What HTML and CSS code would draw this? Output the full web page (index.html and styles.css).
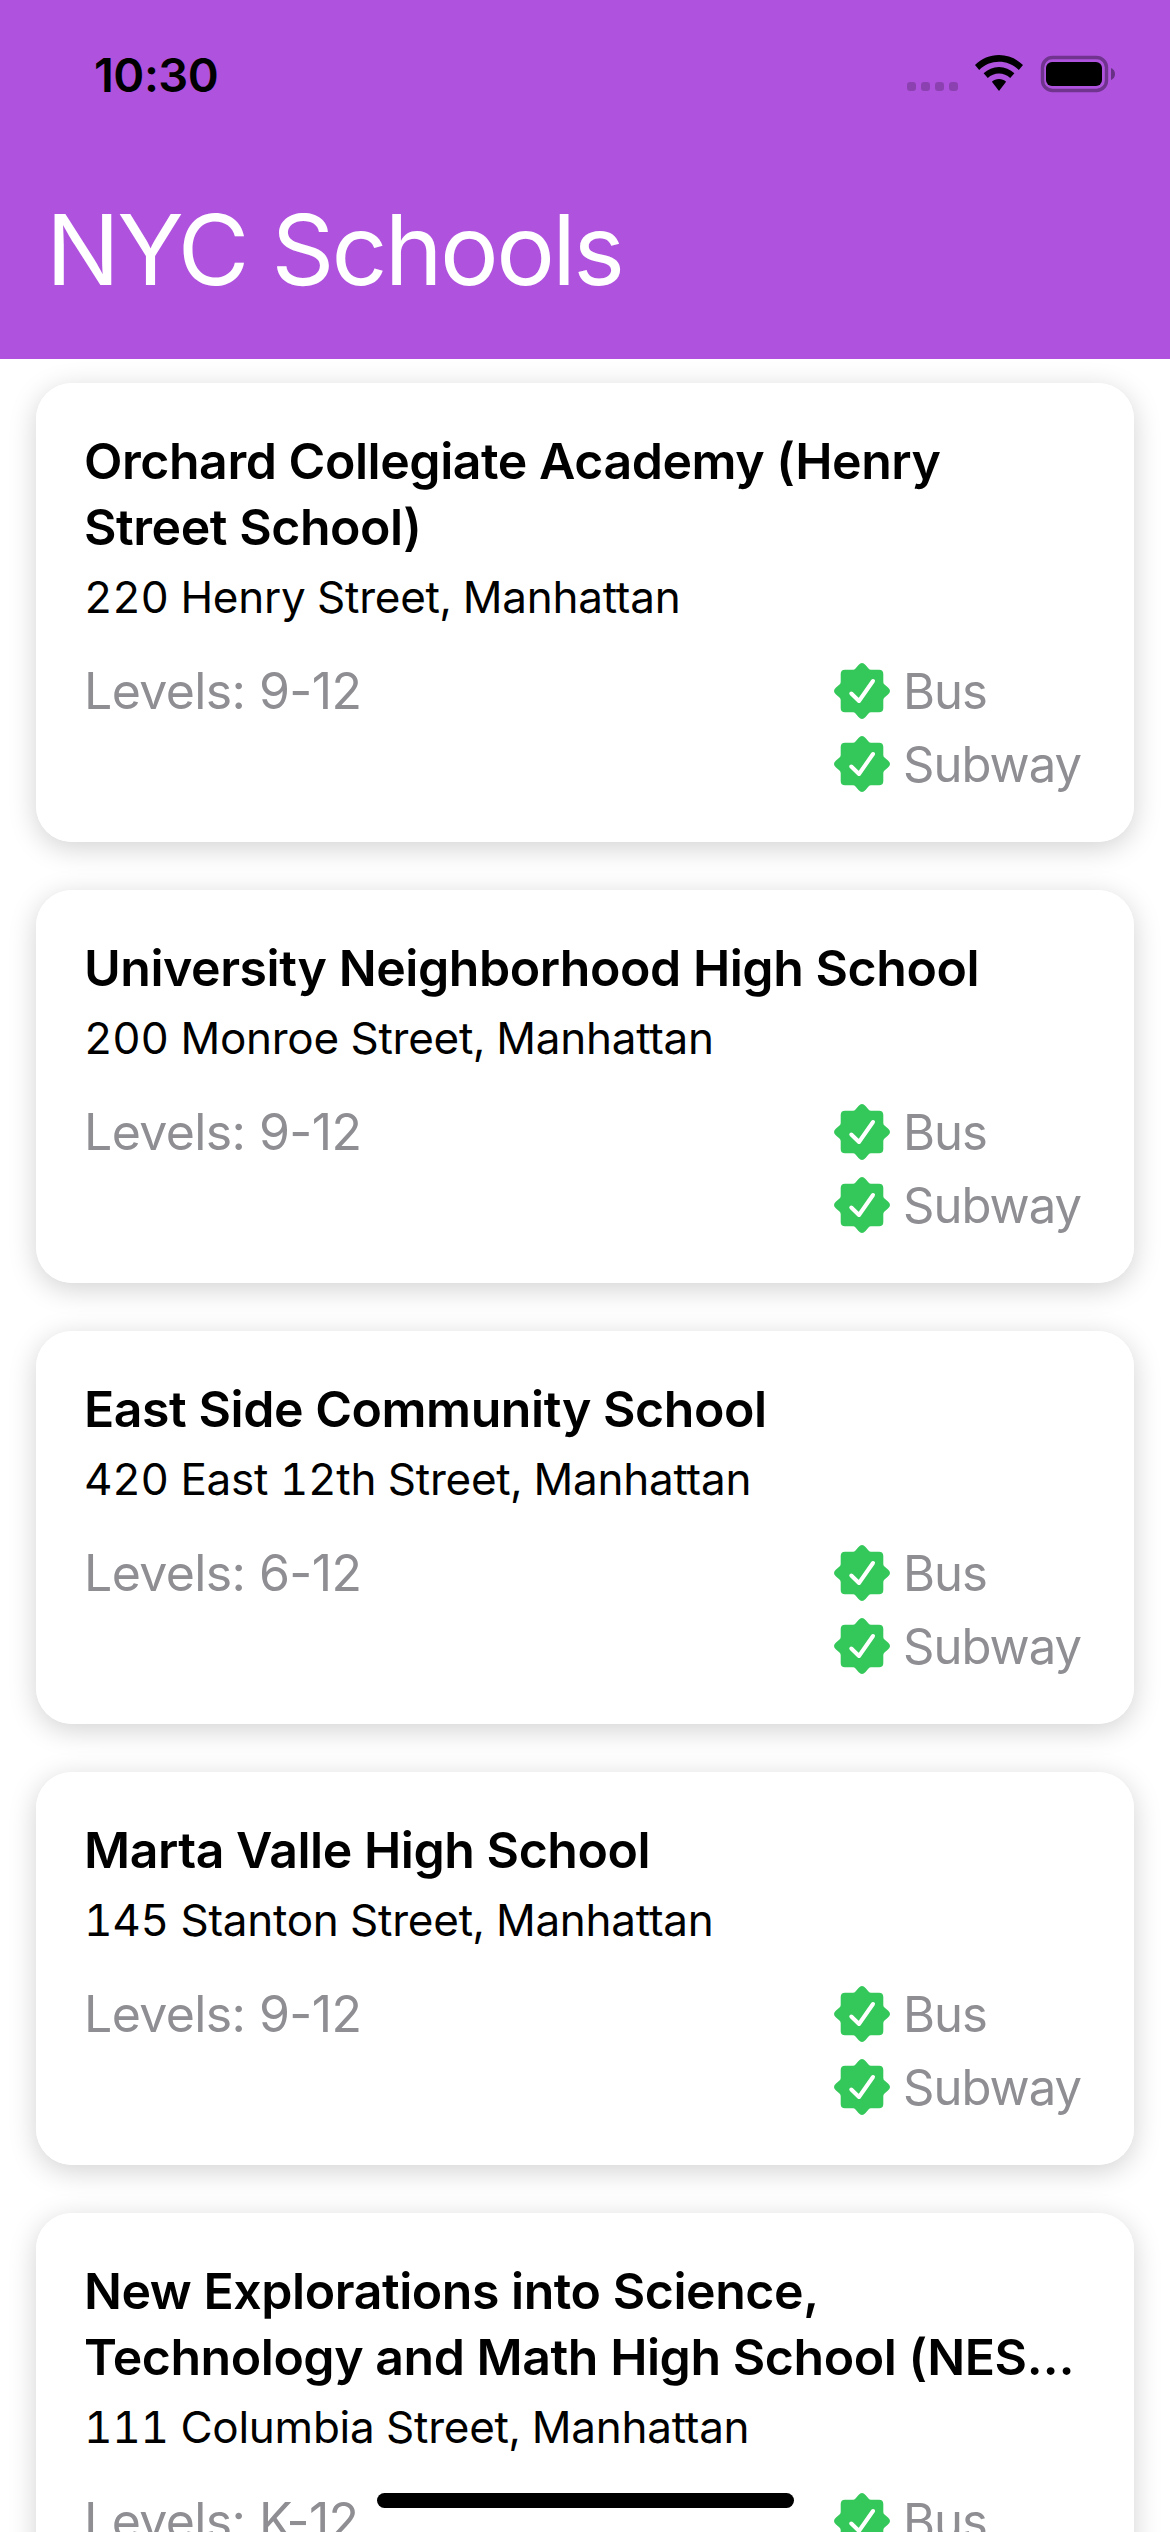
FILE: index.html
```html
<!DOCTYPE html>
<html lang="en">
<head>
<meta charset="utf-8">
<title>NYC Schools</title>
<link rel="stylesheet" href="styles.css">
</head>
<body>
<svg class="defs" width="0" height="0" aria-hidden="true">
  <symbol id="seal" viewBox="0 0 56 56">
    <path fill="#34c759" d="M24.500 2Q28-2 31.500 2L34.500 5.500Q35.500 6.700 37 6.700H45Q49.300 6.700 49.300 11V19Q49.300 20.500 50.500 21.500L54 24.500Q58 28 54 31.500L50.500 34.500Q49.300 35.500 49.300 37V45Q49.300 49.300 45 49.300H37Q35.500 49.300 34.500 50.500L31.500 54Q28 58 24.500 54L21.500 50.500Q20.500 49.300 19 49.300H11Q6.700 49.300 6.700 45V37Q6.700 35.500 5.500 34.500L2 31.500Q-2 28 2 24.500L5.500 21.500Q6.700 20.500 6.700 19V11Q6.700 6.700 11 6.700H19Q20.500 6.700 21.500 5.500Z"/>
    <path fill="none" stroke="#fff" stroke-width="4" stroke-linecap="round" stroke-linejoin="round" d="M17.300 30.500L25 38L39 18"/>
  </symbol>
</svg>
<div class="screen">
  <header class="header">
    <div class="status">
      <span class="time">10:30</span>
      <svg class="status-icons" width="209" height="38" viewBox="907 55 209 38">
        <g fill="#000" fill-opacity=".2">
          <rect x="907" y="82" width="9" height="9" rx="3"/>
          <rect x="921" y="82" width="9" height="9" rx="3"/>
          <rect x="935" y="82" width="9" height="9" rx="3"/>
          <rect x="949" y="82" width="9" height="9" rx="3"/>
        </g>
        <path d="M999 55C1008 55 1016.500 58.600 1023 65L1018.800 70C1013.500 64.700 1006.500 61.800 999 61.800C991.500 61.800 984.500 64.700 979.200 70L975 65C981.500 58.600 990 55 999 55Z"/>
        <path d="M999 67C1004.800 67 1010.200 69.300 1014.400 73.300L1010.200 78.100C1007.200 75.200 1003.200 73.600 999 73.600C994.800 73.600 990.800 75.200 987.800 78.100L983.600 73.300C987.800 69.300 993.200 67 999 67Z"/>
        <path d="M999 79C1001.700 79 1004.200 80 1006.100 81.800L999 91L991.900 81.800C993.800 80 996.300 79 999 79Z"/>
        <rect x="1042.500" y="57.500" width="64" height="33" rx="10" fill="none" stroke="#000" stroke-opacity=".36" stroke-width="3.400"/>
        <rect x="1046" y="62" width="56" height="24" rx="6"/>
        <path d="M1111 68C1113.500 69 1115 71.200 1115 74C1115 76.800 1113.500 79 1111 80Z" fill-opacity=".4"/>
      </svg>
    </div>
    <h1 class="page-title">NYC Schools</h1>
  </header>

  <main class="list">
    <article class="card">
      <h2 class="name">Orchard Collegiate Academy (Henry Street School)</h2>
      <p class="address">220 Henry Street, Manhattan</p>
      <div class="meta">
        <span class="levels">Levels: 9-12</span>
        <ul class="transit">
          <li class="transit-item"><svg class="seal"><use href="#seal"/></svg>Bus</li>
          <li class="transit-item"><svg class="seal"><use href="#seal"/></svg>Subway</li>
        </ul>
      </div>
    </article>
    <article class="card">
      <h2 class="name">University Neighborhood High School</h2>
      <p class="address">200 Monroe Street, Manhattan</p>
      <div class="meta">
        <span class="levels">Levels: 9-12</span>
        <ul class="transit">
          <li class="transit-item"><svg class="seal"><use href="#seal"/></svg>Bus</li>
          <li class="transit-item"><svg class="seal"><use href="#seal"/></svg>Subway</li>
        </ul>
      </div>
    </article>
    <article class="card">
      <h2 class="name">East Side Community School</h2>
      <p class="address">420 East 12th Street, Manhattan</p>
      <div class="meta">
        <span class="levels">Levels: 6-12</span>
        <ul class="transit">
          <li class="transit-item"><svg class="seal"><use href="#seal"/></svg>Bus</li>
          <li class="transit-item"><svg class="seal"><use href="#seal"/></svg>Subway</li>
        </ul>
      </div>
    </article>
    <article class="card">
      <h2 class="name">Marta Valle High School</h2>
      <p class="address">145 Stanton Street, Manhattan</p>
      <div class="meta">
        <span class="levels">Levels: 9-12</span>
        <ul class="transit">
          <li class="transit-item"><svg class="seal"><use href="#seal"/></svg>Bus</li>
          <li class="transit-item"><svg class="seal"><use href="#seal"/></svg>Subway</li>
        </ul>
      </div>
    </article>
    <article class="card">
      <h2 class="name"><span class="name-line">New Explorations into Science,</span><span class="name-line">Technology and Math High School (NEST+M)</span></h2>
      <p class="address">111 Columbia Street, Manhattan</p>
      <div class="meta">
        <span class="levels">Levels: K-12</span>
        <ul class="transit">
          <li class="transit-item"><svg class="seal"><use href="#seal"/></svg>Bus</li>
          <li class="transit-item"><svg class="seal"><use href="#seal"/></svg>Subway</li>
        </ul>
      </div>
    </article>
  </main>

  <div class="home-bar"></div>
</div>
</body>
</html>
```

FILE: styles.css
```css
* { box-sizing: border-box; }

html, body {
  margin: 0;
  padding: 0;
  background: #fff;
}

.defs { position: absolute; }

.screen {
  position: relative;
  width: 1170px;
  height: 2532px;
  overflow: hidden;
  font-family: Inter, "Liberation Sans", sans-serif;
  color: #000;
}

.header {
  position: relative;
  z-index: 1;
  height: 359px;
  background: #af52de;
  display: flex;
  flex-direction: column;
}

.status {
  display: flex;
  justify-content: space-between;
  align-items: flex-start;
  padding: 55px 54px 0 94px;
  height: 195px;
}

.time {
  font-size: 47px;
  font-weight: 600;
  line-height: 40px;
  letter-spacing: -0.5px;
}

.status-icons { display: block; }

.page-title {
  margin: 0;
  padding-left: 46px;
  font-size: 98px;
  font-weight: 400;
  line-height: 110px;
  letter-spacing: -2.7px;
  color: #fff;
}

.list {
  isolation: isolate;
  display: flex;
  flex-direction: column;
  gap: 48px;
  padding: 24px 36px 0;
}

.card {
  position: relative;
  flex: none;
  padding: 45px 53px 41px 48px;
}

.card::before,
.card::after {
  content: "";
  position: absolute;
  inset: 0;
  border-radius: 36px;
  background: #fff;
}

.card::before {
  z-index: -2;
  box-shadow: 0 6px 28px rgba(0, 0, 0, .18);
}

.card::after { z-index: -1; }

.name {
  margin: 0;
  font-size: 50px;
  font-weight: 600;
  line-height: 66px;
  letter-spacing: -0.45px;
}

.name-line {
  display: block;
  white-space: nowrap;
  overflow: hidden;
  text-overflow: ellipsis;
}

.address {
  margin: 5px 0 0;
  font-size: 44px;
  line-height: 64px;
  letter-spacing: -0.25px;
  font-feature-settings: "tnum";
}

.meta {
  display: flex;
  justify-content: space-between;
  align-items: flex-start;
  margin-top: 26px;
  color: #8e8e93;
  font-size: 50px;
  line-height: 73px;
  letter-spacing: -0.6px;
}

.transit {
  list-style: none;
  margin: 0;
  padding: 0;
  font-size: 49px;
  letter-spacing: -1px;
}

.transit-item {
  display: flex;
  align-items: center;
  gap: 13px;
  height: 73px;
}

.seal {
  width: 56px;
  height: 56px;
  flex: none;
  margin-bottom: 2px;
}

.home-bar {
  position: absolute;
  left: 377px;
  top: 2493px;
  width: 417px;
  height: 15px;
  border-radius: 8px;
  background: #000;
}
```
